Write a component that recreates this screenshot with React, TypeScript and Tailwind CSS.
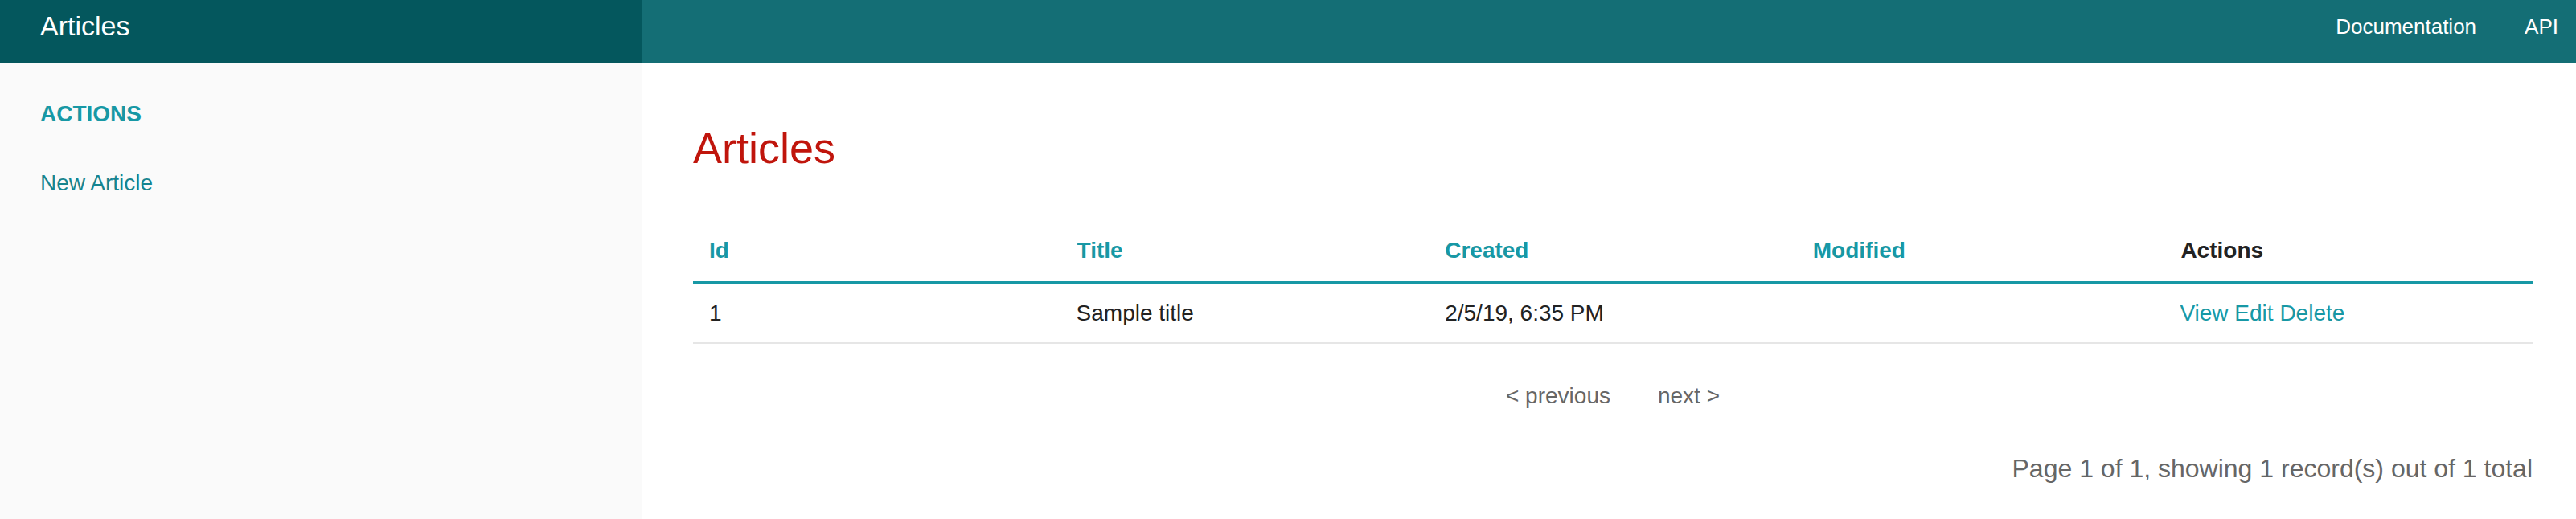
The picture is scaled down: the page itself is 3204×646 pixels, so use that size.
const articles = [
  { id: 1, title: "Sample title", created: "2/5/19, 6:35 PM", modified: "" },
];

const columns = ["Id", "Title", "Created", "Modified"];

const App = () => {
  return (
    <div className="w-full min-h-screen bg-white font-['Liberation_Sans',Arial,sans-serif] text-[#222]">
      <nav className="flex h-[78px] bg-[#146e75] text-white">
        <div className="w-[798px] bg-[#04575d] pl-[50px] pt-[12px]">
          <h1 className="text-[34px] leading-[40px]">Articles</h1>
        </div>
        <div className="flex-1 flex justify-end items-start gap-[60px] pr-[22px] pt-[13px] text-[26px] leading-[40px]">
          <a href="#">Documentation</a>
          <a href="#">API</a>
        </div>
      </nav>

      <div className="flex h-[568px]">
        <aside className="w-[798px] bg-[#fafafa] pl-[50px] pt-[47px]">
          <h4 className="text-[28px] leading-[34px] font-bold text-[#1798a5]">ACTIONS</h4>
          <ul className="mt-[52px]">
            <li>
              <a href="#" className="text-[28px] leading-[34px] text-[#15848f]">New Article</a>
            </li>
          </ul>
        </aside>

        <main className="flex-1 pl-[64px] pr-[54px] pt-[74px]">
          <h3 className="text-[54px] leading-[64px] text-[#c0150c]">Articles</h3>
          <table className="w-full table-fixed mt-[58px] text-[28px] leading-[34px]">
            <thead>
              <tr className="border-b-4 border-[#1798a5]">
                {columns.map(col => (
                  <th key={col} className="text-left font-bold text-[#1798a5] pl-[20px] pt-[21px] pb-[21px]">
                    <a href="#">{col}</a>
                  </th>
                ))}
                <th className="text-left font-bold text-[#222] pl-[20px] pt-[21px] pb-[21px]">Actions</th>
              </tr>
            </thead>
            <tbody>
              {articles.map(a => (
                <tr key={a.id} className="border-b-2 border-[#e6e6e6]">
                  <td className="pl-[20px] pt-[19px] pb-[19px]">{a.id}</td>
                  <td className="pl-[19px] pt-[19px] pb-[19px]">{a.title}</td>
                  <td className="pl-[20px] pt-[19px] pb-[19px]">{a.created}</td>
                  <td className="pl-[20px] pt-[19px] pb-[19px]">{a.modified}</td>
                  <td className="pl-[19px] pt-[19px] pb-[19px] text-[#1798a5]">
                    <a href="#">View</a> <a href="#">Edit</a> <a href="#">Delete</a>
                  </td>
                </tr>
              ))}
            </tbody>
          </table>

          <div className="mt-[48px] flex justify-center gap-[59px] text-[28px] leading-[34px] text-[#666]">
            <span>&lt; previous</span>
            <span>next &gt;</span>
          </div>
          <p className="mt-[54px] text-right text-[32px] leading-[38px] text-[#666]">
            Page 1 of 1, showing 1 record(s) out of 1 total
          </p>
        </main>
      </div>
    </div>
  );
};

export default App;
